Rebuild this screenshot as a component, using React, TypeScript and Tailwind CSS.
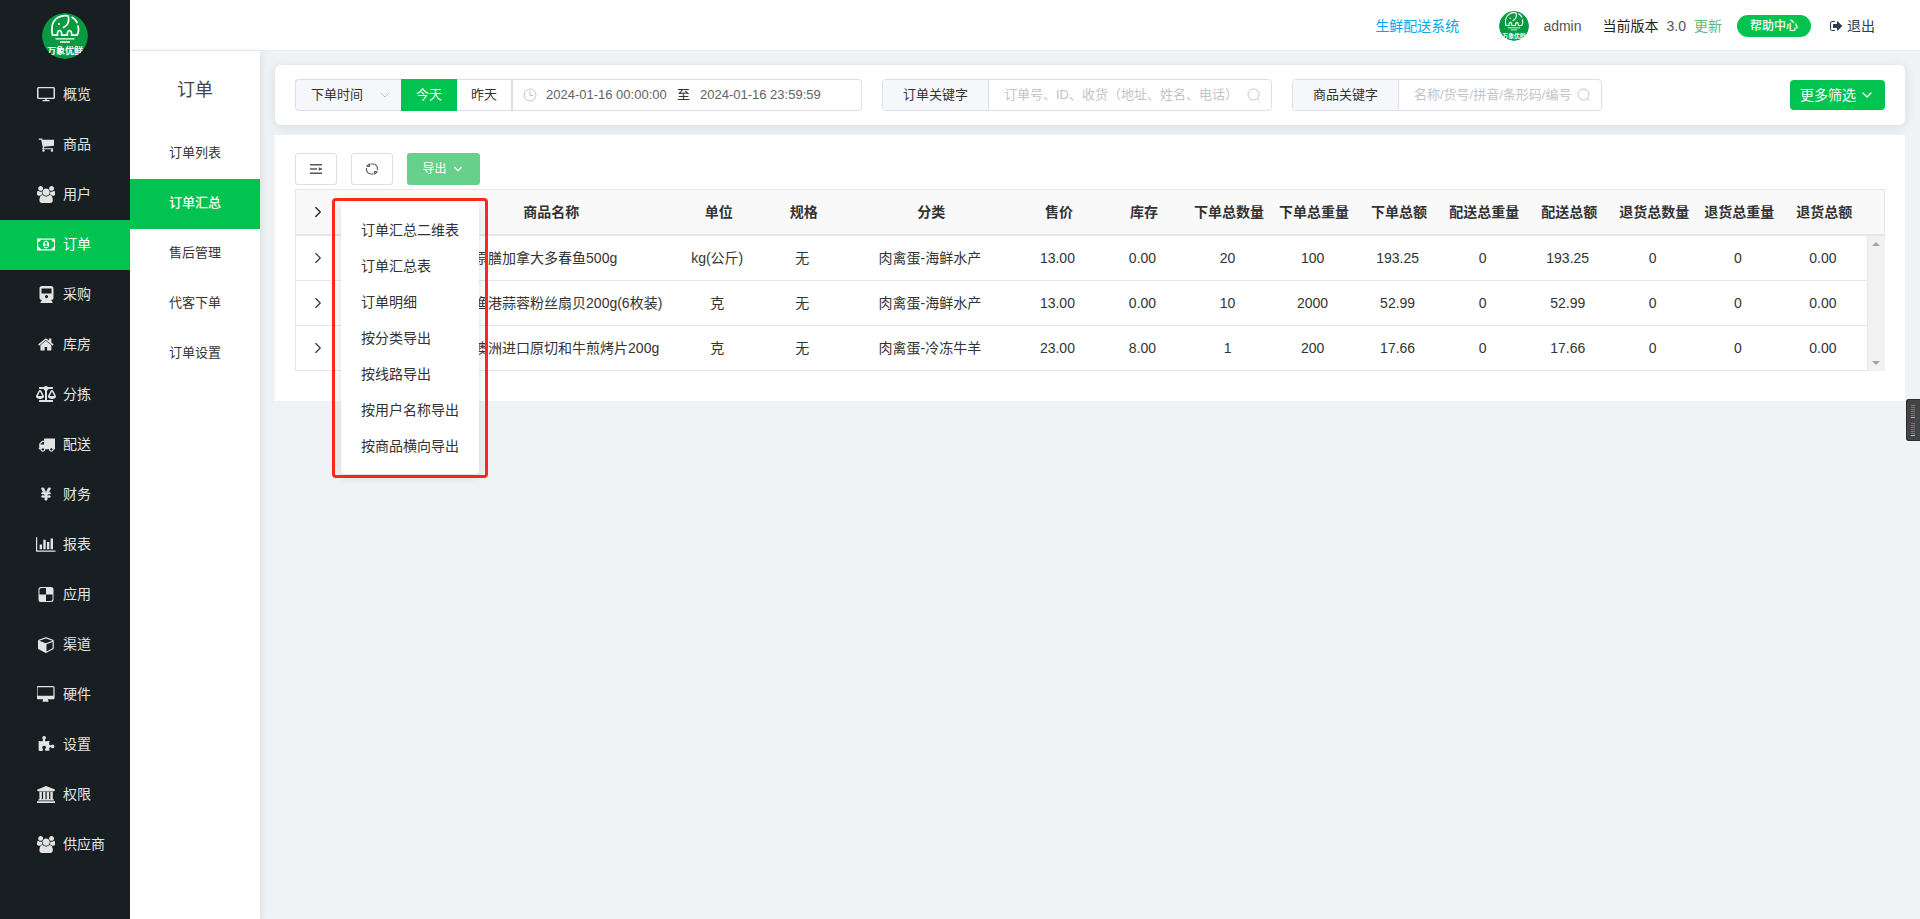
import React from "react";
import { FaBalanceScale, FaYenSign } from "react-icons/fa";
import { ChevronDown, ChevronRight } from "lucide-react";

type Glyph = { box: string; path: string; rule?: "evenodd" };

const glyphs: Record<string, Glyph> = {
  cart: {
    box: "0 0 1728 1792",
    path: "M704 1536q0 52-38 90t-90 38-90-38-38-90 38-90 90-38 90 38 38 90zm896 0q0 52-38 90t-90 38-90-38-38-90 38-90 90-38 90 38 38 90zm128-1088v512q0 24-16.5 42.5t-40.5 21.5l-1044 122q13 60 13 70 0 16-24 64h920q26 0 45 19t19 45-19 45-45 19h-1024q-26 0-45-19t-19-45q0-11 8-31.5t16-36 21.5-40 15.5-29.5l-177-823h-204q-26 0-45-19t-19-45 19-45 45-19h256q16 0 28.5 6.5t19.5 15.5 13 24.5 8 26 5.5 29.5 4.5 26h1201q26 0 45 19t19 45z",
  },
  users: {
    box: "0 0 1920 1792",
    path: "M593 896q-162 5-265 128h-134q-82 0-138-40.5t-56-118.5q0-353 124-353 6 0 43.5 21t97.5 42.5 119 21.5q67 0 133-23-5 37-5 66 0 139 81 256zm1071 637q0 120-73 189.5t-194 69.5h-874q-121 0-194-69.5t-73-189.5q0-53 3.5-103.5t14-109 26.5-108.5 43-97.5 62-81 85.5-53.5 111.5-20q10 0 43 21.5t73 48 107 48 135 21.5 135-21.5 107-48 73-48 43-21.5q61 0 111.5 20t85.5 53.5 62 81 43 97.5 26.5 108.5 14 109 3.5 103.5zm-1024-1277q0 106-75 181t-181 75-181-75-75-181 75-181 181-75 181 75 75 181zm704 384q0 159-112.5 271.5t-271.5 112.5-271.5-112.5-112.5-271.5 112.5-271.5 271.5-112.5 271.5 112.5 112.5 271.5zm576 225q0 78-56 118.5t-138 40.5h-134q-103-123-265-128 81-117 81-256 0-29-5-66 66 23 133 23 59 0 119-21.5t97.5-42.5 43.5-21q124 0 124 353zm-128-609q0 106-75 181t-181 75-181-75-75-181 75-181 181-75 181 75 75 181z",
  },
  money: {
    box: "0 0 1920 1792",
    path: "M768 1152h384v-96h-128v-448h-114l-148 137 77 80q42-37 55-57h2v288h-128v96zm512-256q0 70-21 142t-59.5 134-101.5 101-138 39-138-39-101.5-101-59.5-134-21-142 21-142 59.5-134 101.5-101 138-39 138 39 101.5 101 59.5 134 21 142zm512 256v-512q-106 0-181-75t-75-181h-1152q0 106-75 181t-181 75v512q106 0 181 75t75 181h1152q0-106 75-181t181-75zm128-832v1152q0 26-19 45t-45 19h-1792q-26 0-45-19t-19-45v-1152q0-26 19-45t45-19h1792q26 0 45 19t19 45z",
    rule: "evenodd",
  },
  home: {
    box: "64 0 1664 1792",
    path: "M1472 992v480q0 26-19 45t-45 19h-384v-384h-256v384h-384q-26 0-45-19t-19-45v-480q0-1 .5-3t.5-3l575-474 575 474q1 2 1 6zm223-69l-62 74q-8 9-21 11h-3q-13 0-21-7l-692-577-692 577q-12 8-24 7-13-2-21-11l-62-74q-8-10-7-23.5t11-21.5l719-599q32-26 76-26t76 26l244 204v-195q0-14 9-23t23-9h192q14 0 23 9t9 23v408l219 182q10 8 11 21.5t-7 23.5z",
  },
  truck: {
    box: "0 0 1792 1792",
    path: "M640 1408q0-52-38-90t-90-38-90 38-38 90 38 90 90 38 90-38 38-90zm-384-512h384v-256h-158q-13 0-22 9l-195 195q-9 9-9 22v30zm1280 512q0-52-38-90t-90-38-90 38-38 90 38 90 90 38 90-38 38-90zm256-1088v1024q0 15-4 26.5t-13.5 18.5-16.5 11.5-23.5 6-22.5 2-25.5 0-22.5-.5q0 106-75 181t-181 75-181-75-75-181h-384q0 106-75 181t-181 75-181-75-75-181h-64q-3 0-22.5.5t-25.5 0-22.5-2-23.5-6-16.5-11.5-13.5-18.5-4-26.5q0-26 19-45t45-19v-320q0-8-.5-35t0-38 2.5-34.5 6.5-37 14-30.5 22.5-30l198-198q19-19 50.5-32t58.5-13h160v-192q0-26 19-45t45-19h1024q26 0 45 19t19 45z",
    rule: "evenodd",
  },
  chart: {
    box: "0 0 2048 1792",
    path: "M640 896v512h-256v-512h256zm384-512v1024h-256v-1024h256zm1024 1152v128h-2048v-1536h128v1408h1920zm-640-896v768h-256v-768h256zm384-384v1152h-256v-1152h256z",
  },
  cube: {
    box: "0 0 1664 1792",
    path: "M896 1629l640-349v-636l-640 233v752zm-64-865l698-254-698-254-698 254zm832-252v768q0 35-18 65t-49 47l-704 384q-28 16-61 16t-61-16l-704-384q-31-17-49-47t-18-65v-768q0-40 23-73t61-47l704-256q22-8 44-8t44 8l704 256q38 14 61 47t23 73z",
    rule: "evenodd",
  },
  desktop: {
    box: "0 0 1856 1792",
    path: "M1728 992v-832q0-13-9.5-22.5t-22.5-9.5h-1600q-13 0-22.5 9.5t-9.5 22.5v832q0 13 9.5 22.5t22.5 9.5h1600q13 0 22.5-9.5t9.5-22.5zm128-832v1088q0 66-47 113t-113 47h-544q0 37 16 77.5t32 71 16 43.5q0 26-19 45t-45 19h-512q-26 0-45-19t-19-45q0-14 16-44t32-70 16-78h-544q-66 0-113-47t-47-113v-1088q0-66 47-113t113-47h1600q66 0 113 47t47 113z",
    rule: "evenodd",
  },
  puzzle: {
    box: "0 0 1792 1792",
    path: "M1728 1098q0 81-44.5 135t-123.5 54q-41 0-77.5-17.5t-59-38-56.5-38-71-17.5q-110 0-110 124 0 39 16 115t15 115v5q-22 0-33 1-34 3-97.5 11.5t-115.5 13.5-98 5q-61 0-103-26.5t-42-83.5q0-37 17.5-71t38-56.5 38-59 17.5-77.5q0-79-54-123.5t-135-44.5q-84 0-143 45.5t-59 127.5q0 43 15 83t33.5 64.5 33.5 53 15 50.5q0 45-46 89-37 35-117 35-95 0-245-24-9-2-27.5-4t-27.5-4l-13-2q-1 0-3-1-2 0-2-1v-1024q2 1 17.5 3.5t34 5 21.5 3.5q150 24 245 24 80 0 117-35 46-44 46-89 0-22-15-50.5t-33.5-53-33.5-64.5-15-83q0-82 59-127.5t144-45.5q80 0 134 44.5t54 123.5q0 41-17.5 77.5t-38 59-38 56.5-17.5 71q0 57 42 83.5t103 26.5q64 0 180-15t163-17v2q-1 2-3.5 17.5t-5 34-3.5 21.5q-24 150-24 245 0 80 35 117 44 46 89 46 22 0 50.5-15t53-33.5 64.5-33.5 83-15q82 0 127.5 59t45.5 143z",
  },
  bank: {
    box: "0 0 1920 1792",
    path: "M960 0l960 384v128h-128q0 26-20.5 45t-48.5 19h-1526q-28 0-48.5-19t-20.5-45h-128v-128zm-704 640h256v768h128v-768h256v768h128v-768h256v768h128v-768h256v768h59q28 0 48.5 19t20.5 45v64h-1664v-64q0-26 20.5-45t48.5-19h59v-768zm1595 960q28 0 48.5 19t20.5 45v128h-1920v-128q0-26 20.5-45t48.5-19h1782z",
  },
  tv: {
    box: "0 0 18 17",
    path: "M1.5 1A1.5 1.5 0 0 0 0 2.5v9A1.5 1.5 0 0 0 1.5 13h6.700v1H5.500v1.300h7V14H9.800v-1h6.700a1.500 1.500 0 0 0 1.500-1.500v-9A1.500 1.500 0 0 0 16.500 1zm0 1.300h15v9.400h-15z",
    rule: "evenodd",
  },
  train: {
    box: "0 0 15 17",
    path: "M3 0h9a2.500 2.500 0 0 1 2.500 2.500v9A2.500 2.500 0 0 1 12 14l1.500 2v1H1.500v-1L3 14A2.500 2.500 0 0 1 .5 11.500v-9A2.500 2.500 0 0 1 3 0zm-.5 2.500v5h10v-5zm5 6.500a1.600 1.600 0 1 0 0 3.200A1.600 1.600 0 0 0 7.500 9z",
    rule: "evenodd",
  },
  grid: {
    box: "0 0 16 17",
    path: "M3 1h10a2.500 2.500 0 0 1 2.500 2.500v10A2.500 2.500 0 0 1 13 16H3a2.500 2.500 0 0 1-2.500-2.500v-10A2.500 2.500 0 0 1 3 1zm.5 1A2 2 0 0 0 1.500 4v4.500H8V2zM8 8.500V15h4.500a2 2 0 0 0 2-2V8.500z",
    rule: "evenodd",
  },
};

const FontGlyph: React.FC<{ name: string }> = ({ name }) => (
  <svg
    viewBox={glyphs[name].box}
    className="h-[17px] w-auto"
    fill="currentColor"
    fillRule={glyphs[name].rule}
    aria-hidden="true"
  >
    <path d={glyphs[name].path} />
  </svg>
);

const mainMenu: { label: string; icon: React.ReactNode }[] = [
  { label: "概览", icon: <FontGlyph name="tv" /> },
  { label: "商品", icon: <FontGlyph name="cart" /> },
  { label: "用户", icon: <FontGlyph name="users" /> },
  { label: "订单", icon: <FontGlyph name="money" /> },
  { label: "采购", icon: <FontGlyph name="train" /> },
  { label: "库房", icon: <FontGlyph name="home" /> },
  { label: "分拣", icon: <FaBalanceScale className="h-4 w-5" /> },
  { label: "配送", icon: <FontGlyph name="truck" /> },
  { label: "财务", icon: <FaYenSign className="h-[14px] w-[14px]" stroke="currentColor" strokeWidth={24} /> },
  { label: "报表", icon: <FontGlyph name="chart" /> },
  { label: "应用", icon: <FontGlyph name="grid" /> },
  { label: "渠道", icon: <FontGlyph name="cube" /> },
  { label: "硬件", icon: <FontGlyph name="desktop" /> },
  { label: "设置", icon: <FontGlyph name="puzzle" /> },
  { label: "权限", icon: <FontGlyph name="bank" /> },
  { label: "供应商", icon: <FontGlyph name="users" /> },
];

const subMenu = ["订单列表", "订单汇总", "售后管理", "代客下单", "订单设置"];

const exportItems = [
  "订单汇总二维表",
  "订单汇总表",
  "订单明细",
  "按分类导出",
  "按线路导出",
  "按用户名称导出",
  "按商品横向导出",
];

const columns = [
  "单位",
  "规格",
  "分类",
  "售价",
  "库存",
  "下单总数量",
  "下单总重量",
  "下单总额",
  "配送总重量",
  "配送总额",
  "退货总数量",
  "退货总重量",
  "退货总额",
];

const rows = [
  {
    name: "原膳加拿大多春鱼500g",
    cells: ["kg(公斤)", "无", "肉禽蛋-海鲜水产", "13.00", "0.00", "20", "100", "193.25", "0", "193.25", "0", "0", "0.00"],
  },
  {
    name: "渔港蒜蓉粉丝扇贝200g(6枚装)",
    cells: ["克", "无", "肉禽蛋-海鲜水产", "13.00", "0.00", "10", "2000", "52.99", "0", "52.99", "0", "0", "0.00"],
  },
  {
    name: "澳洲进口原切和牛煎烤片200g",
    cells: ["克", "无", "肉禽蛋-冷冻牛羊", "23.00", "8.00", "1", "200", "17.66", "0", "17.66", "0", "0", "0.00"],
  },
];

const Logo: React.FC<{ className: string }> = ({ className }) => (
  <svg viewBox="0 0 46 46" className={`shrink-0 overflow-hidden rounded-full ${className}`} role="img" aria-label="logo">
    <circle cx="23" cy="23" r="23" fill="#069a41" />
    <g fill="none" stroke="#fff" strokeWidth="1.7" strokeLinecap="round" strokeLinejoin="round">
      <path d="M26 2.900A13.300 13.300 0 0 0 10.300 12C9.500 16 9.800 19 10.500 22.200h5c-.3-3 .5-4.700 2-4.700s2.200 1.700 2.200 4.700h5.600c0-3 .6-4.700 2.200-4.700s2.200 1.700 2.200 4.700h5.300c1.600-2.500 1.800-6 1-9.200" />
      <path d="M30 4.300c2.300 1.300 4 3 5 5.200" />
      <path d="M26.500 4c.8 5-.8 8.500-5 10.500" />
    </g>
    <path d="M13.500 25.800h19M18 29h10" stroke="#fff" strokeWidth="1.300" />
    <circle cx="17" cy="11" r="1.100" fill="#fff" />
    <text x="23" y="41" textAnchor="middle" fontSize="9" fontWeight="700" fill="#fff">
      万象优鲜
    </text>
  </svg>
);

const SearchGlyph = () => (
  <svg viewBox="0 0 14 14" className="h-[14px] w-[14px] shrink-0" fill="none" stroke="#c0c4cc" aria-hidden="true">
    <circle cx="6.500" cy="6.500" r="5.500" />
    <path d="M10.500 10.500l2 2" />
  </svg>
);

const Sidebar = () => (
  <aside className="w-[130px] shrink-0 bg-[#181f22]">
    <div className="flex h-[70px] justify-center pt-[13px]">
      <Logo className="h-[46px] w-[46px]" />
    </div>
    <nav>
      {mainMenu.map((item) => (
        <a
          key={item.label}
          href="#"
          className={`flex h-[50px] items-center gap-[7px] pb-[2px] pl-9 text-sm ${
            item.label === "订单" ? "bg-[#02c350] text-white" : "text-[#e2e4e4]"
          }`}
        >
          <span className="flex w-5 justify-center">{item.icon}</span>
          {item.label}
        </a>
      ))}
    </nav>
  </aside>
);

const Header = () => (
  <header className="flex h-[51px] items-center justify-end border-b border-[#ededed] bg-white pt-[2px] pr-[45px] text-sm text-[#555]">
    <a href="#" className="mr-10 text-[#09a5ed]">
      生鲜配送系统
    </a>
    <Logo className="mr-[14px] h-[30px] w-[30px]" />
    <span className="mr-[21px]">admin</span>
    <span className="mr-2 text-[#222]">当前版本</span>
    <span className="mr-2">3.0</span>
    <a href="#" className="mr-[15px] text-[#5fb878]">
      更新
    </a>
    <button className="mr-[19px] h-[22px] rounded-full bg-[#02c350] px-[13px] text-xs font-medium text-white">
      帮助中心
    </button>
    <a href="#" className="flex items-center gap-1 text-[#2c3e50]">
      <svg viewBox="0 0 1664 1792" className="h-[14px] w-auto" fill="currentColor" aria-hidden="true">
        <path d="M640 1440q0 4 1 20t.5 26.500-3 23.500-10 19.500-20.500 6.500h-320q-119 0-203.500-84.500t-84.500-203.500v-704q0-119 84.500-203.500t203.500-84.500h320q13 0 22.500 9.500t9.500 22.500q0 4 1 20t.5 26.500-3 23.500-10 19.500-20.500 6.500h-320q-66 0-113 47t-47 113v704q0 66 47 113t113 47h312l11.500 1 11.500 3 8 5.500 7 9 2 13.500zm928-544q0 26-19 45l-544 544q-19 19-45 19t-45-19-19-45v-288h-448q-26 0-45-19t-19-45v-384q0-26 19-45t45-19h448v-288q0-26 19-45t45-19 45 19l544 544q19 19 19 45z" />
      </svg>
      退出
    </a>
  </header>
);

const SubNav = () => (
  <aside className="w-[130px] shrink-0 bg-white shadow-[2px_0_6px_rgba(0,0,0,0.08)]">
    <h2 className="flex h-[78px] items-center justify-center text-lg text-[#444]">订单</h2>
    <nav>
      {subMenu.map((label) => (
        <a
          key={label}
          href="#"
          className={`flex h-[50px] items-center justify-center pb-[2px] text-[13px] ${
            label === "订单汇总" ? "bg-[#02c350] font-medium text-white" : "text-[#333]"
          }`}
        >
          {label}
        </a>
      ))}
    </nav>
  </aside>
);

const KeywordField: React.FC<{ id: string; label: string; placeholder: string; width: string }> = ({
  id,
  label,
  placeholder,
  width,
}) => (
  <div className={`flex h-8 overflow-hidden rounded border border-[#dcdfe6] ${width}`}>
    <label
      htmlFor={id}
      className="flex w-[106px] shrink-0 items-center justify-center border-r border-[#dcdfe6] bg-[#f5f7fa] text-[13px] text-[#333]"
    >
      {label}
    </label>
    <div className="flex min-w-0 flex-1 items-center pr-[10px] pl-[15px]">
      <input
        id={id}
        placeholder={placeholder}
        className="min-w-0 flex-1 text-[13px] outline-none placeholder:text-[#c0c4cc]"
      />
      <SearchGlyph />
    </div>
  </div>
);

const FilterBar = () => (
  <section className="flex h-[60px] items-center rounded-md bg-white px-5 shadow-[0_2px_12px_rgba(0,0,0,0.1)]">
    <div className="flex h-8 w-[567px] text-[13px] text-[#333]">
      <div className="relative w-[106px] rounded-l border border-r-0 border-[#dcdfe6] bg-[#f5f7fa]">
        <select aria-label="时间类型" className="h-full w-full appearance-none pl-[15px] outline-none">
          <option>下单时间</option>
        </select>
        <ChevronDown className="pointer-events-none absolute top-[7px] right-2 h-4 w-4 text-[#c0c4cc]" strokeWidth={1.5} />
      </div>
      <button className="w-14 bg-[#02c350] text-white">今天</button>
      <button className="w-[54px] border-y border-[#dcdfe6] bg-white">昨天</button>
      <div className="flex flex-1 items-center rounded-r border border-l-2 border-[#dcdfe6] pl-[10px] text-[#606266]">
        <svg viewBox="0 0 14 14" className="mr-[9px] h-[14px] w-[14px]" fill="none" stroke="#c0c4cc" aria-hidden="true">
          <circle cx="7" cy="7" r="6" />
          <path d="M7 3.500V7.500h3.500" />
        </svg>
        <input aria-label="开始时间" defaultValue="2024-01-16 00:00:00" className="w-[131px] outline-none" />
        <span className="w-[23px] text-[#333]">至</span>
        <input aria-label="结束时间" defaultValue="2024-01-16 23:59:59" className="w-[131px] outline-none" />
      </div>
    </div>
    <div className="ml-5 flex gap-5">
      <KeywordField id="order-key" label="订单关键字" placeholder="订单号、ID、收货（地址、姓名、电话）" width="w-[390px]" />
      <KeywordField id="goods-key" label="商品关键字" placeholder="名称/货号/拼音/条形码/编号" width="w-[310px]" />
    </div>
    <button className="ml-auto flex h-[30px] items-center gap-[3px] rounded-sm bg-[#02c350] px-[10px] text-sm text-white">
      更多筛选
      <ChevronDown className="h-4 w-4" strokeWidth={1.8} />
    </button>
  </section>
);

const ExportMenu = () => (
  <div className="absolute top-[45px] left-[-75px] z-10 rounded border-[3px] border-[#fb2a1c] px-[6px] py-px">
    <ul className="rounded-sm bg-white py-[10px] shadow-[0_2px_12px_rgba(0,0,0,0.12)]">
      {exportItems.map((item) => (
        <li key={item}>
          <button className="h-9 w-full px-5 text-left text-sm whitespace-nowrap text-[#333]">{item}</button>
        </li>
      ))}
    </ul>
  </div>
);

const Toolbar = () => (
  <div className="mb-1 flex gap-[14px]">
    <button aria-label="列设置" className="flex h-8 w-[42px] items-center justify-center rounded-[3px] border border-[#dcdfe6]">
      <svg viewBox="0 0 14 14" className="h-[14px] w-[14px]" fill="none" stroke="#55585e" strokeWidth="1.600" aria-hidden="true">
        <path d="M1 2.700h12M1 7h7M1 11.300h12M9.500 7H13" />
        <path d="M10 5l2 2-2 2z" fill="#55585e" stroke="none" />
      </svg>
    </button>
    <button aria-label="刷新" className="flex h-8 w-[42px] items-center justify-center rounded-[3px] border border-[#dcdfe6]">
      <svg viewBox="0 0 14 14" className="h-[14px] w-[14px]" fill="none" stroke="#606266" strokeWidth="1.200" aria-hidden="true">
        <path d="M5.500 2h2.500a4.500 4.500 0 0 1 4.500 4.500V8M8.500 12H6a4.500 4.500 0 0 1-4.500-4.500V6" />
        <path d="M1.500 4.500L4.500 4.500V1.500M1.700 4.300L4 2.300M12.500 9.500H9.500v3M12.300 9.700L10 11.700" />
      </svg>
    </button>
    <div className="relative">
      <button className="flex h-8 w-[73px] items-center justify-center gap-1 rounded-[3px] bg-[#67d08a] text-xs text-white">
        导出
        <ChevronDown className="h-[14px] w-[14px]" strokeWidth={2} />
      </button>
      <ExportMenu />
    </div>
  </div>
);

const SummaryTable = () => (
  <table className="w-full table-fixed border-separate border-spacing-0 border-l border-[#e6e6e6] text-center text-sm whitespace-nowrap text-[#333]">
    <colgroup>
      <col className="w-[45px]" />
      <col className="w-[85px]" />
      <col className="w-[250px]" />
      {columns.map((name) => (
        <col key={name} className={name === "分类" ? "w-[170px]" : "w-[85px]"} />
      ))}
      <col className="w-[18px]" />
    </colgroup>
    <thead>
      <tr className="h-[47px] bg-[#f9f9f9]">
        <th className="border-t border-b-2 border-[#e6e6e6] pr-[2px]">
          <ChevronRight className="mx-auto h-[18px] w-[18px]" strokeWidth={2} />
        </th>
        <th className="border-t border-b-2 border-[#e6e6e6]"></th>
        <th className="border-t border-b-2 border-[#e6e6e6]">商品名称</th>
        {columns.map((name) => (
          <th key={name} className="border-t border-b-2 border-[#e6e6e6]">
            {name}
          </th>
        ))}
        <th className="border-t border-r border-b-2 border-[#e6e6e6]"></th>
      </tr>
    </thead>
    <tbody>
      {rows.map((row, index) => (
        <tr key={row.name} className="h-[45px]">
          <td className="border-b border-[#e6e6e6] pr-[2px]">
            <ChevronRight className="mx-auto h-[18px] w-[18px]" strokeWidth={1.5} />
          </td>
          <td className="border-b border-[#e6e6e6]"></td>
          <td className="border-b border-[#e6e6e6] pl-12 text-left">{row.name}</td>
          {row.cells.map((cell, i) => (
            <td key={columns[i]} className="border-b border-[#e6e6e6] pr-[3px]">
              {cell}
            </td>
          ))}
          {index === 0 && (
            <td rowSpan={rows.length} className="h-[135px] border-l border-[#e6e6e6] bg-[#f1f1f1]">
              <div className="flex h-[135px] flex-col items-center justify-between py-[6px]">
                <svg viewBox="0 0 8 4" className="h-1 w-2" aria-hidden="true">
                  <path d="M4 0l4 4H0z" fill="#a3a3a3" />
                </svg>
                <svg viewBox="0 0 8 4" className="h-1 w-2" aria-hidden="true">
                  <path d="M0 0h8L4 4z" fill="#a3a3a3" />
                </svg>
              </div>
            </td>
          )}
        </tr>
      ))}
    </tbody>
  </table>
);

// Floating level meter docked on the right edge of the window
const LevelMeter = () => (
  <div className="fixed top-[399px] right-0 flex h-[42px] w-[14px] flex-col gap-[5px] rounded-l-[3px] border border-r-0 border-[#2b2b2b] bg-[#444] pt-[5px] pl-1">
    {["bg-[#f5a623]", "bg-[#8ee04e]"].map((tone) => (
      <div key={tone} className="flex flex-col gap-px">
        {[0, 1, 2, 3, 4, 5].map((n) => (
          <span key={n} className="h-px w-1 bg-[#777]" />
        ))}
        <span className={`h-px w-1 ${tone}`} />
      </div>
    ))}
  </div>
);

export default function App() {
  return (
    <div className="flex min-h-screen bg-[#eff3f6] font-['Liberation_Sans','Noto_Sans_CJK_SC',sans-serif]">
      <Sidebar />
      <div className="flex min-w-0 flex-1 flex-col">
        <Header />
        <div className="flex flex-1">
          <SubNav />
          <main className="min-w-0 flex-1 pt-[14px] pr-[15px] pl-[15px]">
            <FilterBar />
            <section className="mt-[10px] bg-white px-5 pt-[18px] pb-[30px]">
              <Toolbar />
              <SummaryTable />
            </section>
          </main>
        </div>
      </div>
      <LevelMeter />
    </div>
  );
}
